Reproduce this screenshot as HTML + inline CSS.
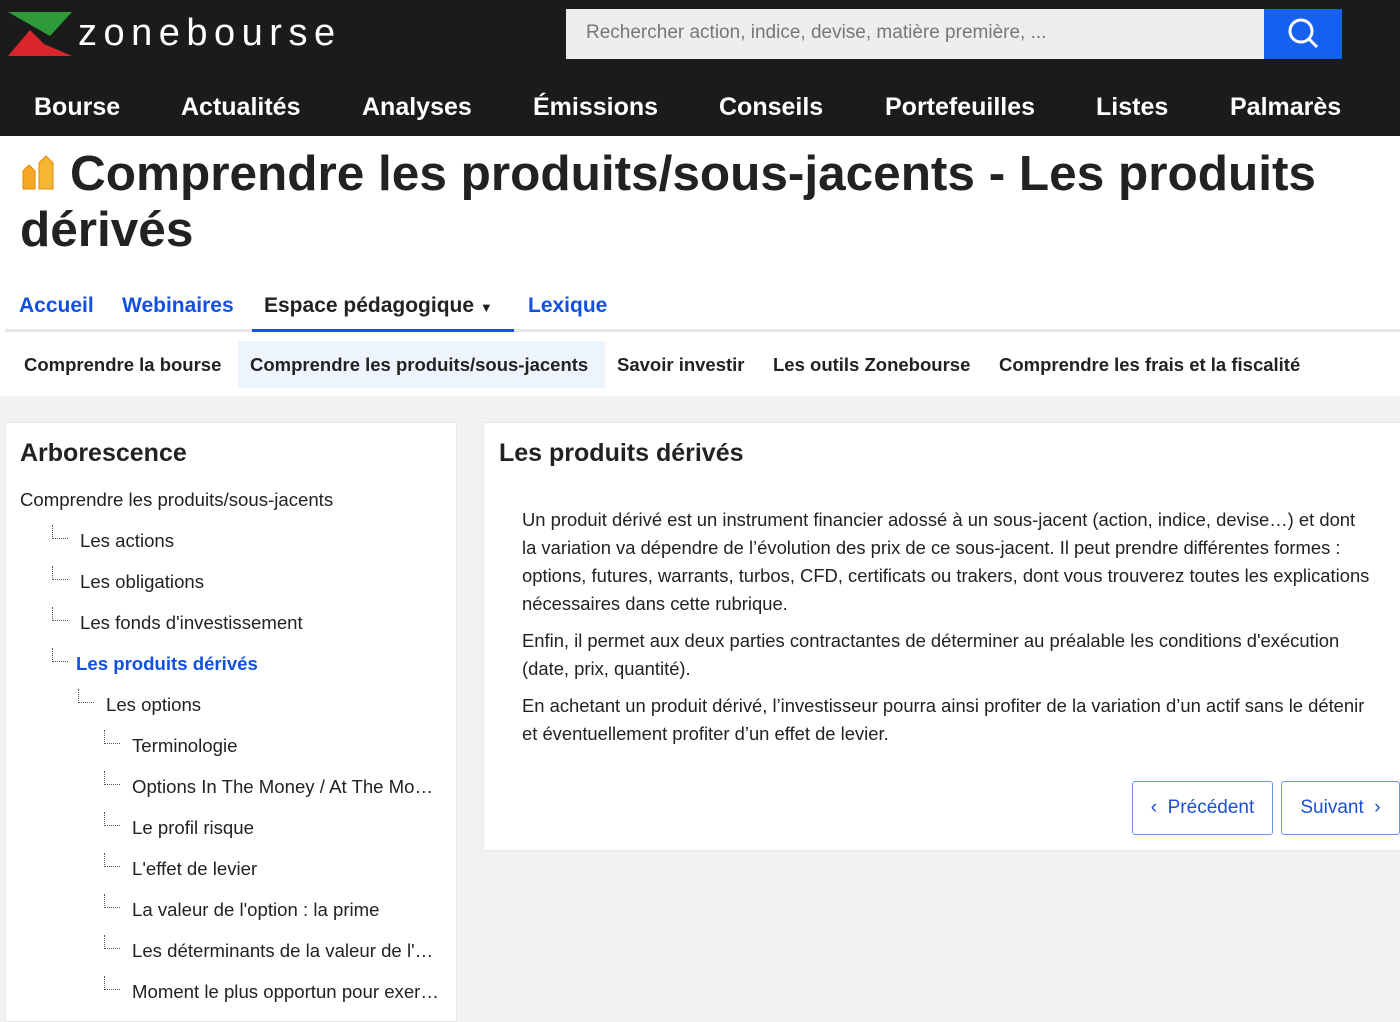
<!DOCTYPE html>
<html><head><meta charset="utf-8"><style>
*{margin:0;padding:0;box-sizing:border-box}
body{width:1400px;height:1000px;overflow:hidden;background:#f2f2f2;font-family:"Liberation Sans",sans-serif;color:#222;position:relative}
.hdr{position:absolute;left:0;top:0;width:1400px;height:136px;background:#1b1b1b}
.logo{position:absolute;left:8px;top:10px}
.logotxt{position:absolute;left:78px;top:12px;color:#fff;font-size:38px;letter-spacing:6.5px}
.search{position:absolute;left:566px;top:9px;width:698px;height:50px;background:#eee;color:#777;font-size:19px;padding:13px 20px}
.sbtn{position:absolute;left:1264px;top:9px;width:78px;height:50px;background:#1660f0}
.nav{position:absolute;top:93px;color:#fff;font-weight:bold;font-size:25px}
.top{position:absolute;left:0;top:136px;width:1400px;height:260px;background:#fff}
h1{position:absolute;left:20px;top:146px;font-size:49.5px;line-height:56px;color:#222;width:1380px;text-indent:50px}
.tab{position:absolute;top:294px;font-size:21px;font-weight:bold;color:#1251e0}
.tabline{position:absolute;left:5px;top:329px;width:1395px;height:3px;background:#e6e6e6}
.tabact{position:absolute;left:252px;top:329px;width:262px;height:3px;background:#1651e6}
.sub{position:absolute;top:354px;font-size:18.5px;font-weight:bold;color:#222}
.subact{position:absolute;left:238px;top:341px;width:367px;height:47px;background:#eef4fb}
.panel{position:absolute;background:#fff;border:1px solid #e8e8e8}
.ph{position:absolute;font-size:25px;font-weight:bold;color:#222}
.ti{position:absolute;font-size:18.6px;color:#222;white-space:nowrap}
.cn{position:absolute;width:16px;height:14px;border-left:1px dotted #555;border-bottom:1px dotted #555}
p{position:absolute;left:522px;width:850px;font-size:18.4px;line-height:28px;color:#222}
.btn{position:absolute;top:781px;height:54px;border:1px solid #6d93e8;border-radius:3px;color:#1a4fd6;font-size:19px;display:flex;align-items:center;justify-content:center;background:#fff}
</style></head><body>
<div class="hdr"></div>
<svg class="logo" width="66" height="48" viewBox="0 0 66 48"><polygon points="0,2 64,2 42,26" fill="#2f9a3a"/><polygon points="22,20 0,46 64,46 36,34" fill="#d8262b"/></svg>
<div class="logotxt">zonebourse</div>
<div class="search">Rechercher action, indice, devise, matière première, ...</div>
<div class="sbtn"><svg width="78" height="50"><circle cx="37" cy="22" r="11" fill="none" stroke="#fff" stroke-width="3"/><line x1="45" y1="30" x2="53" y2="38" stroke="#fff" stroke-width="3"/></svg></div>
<div class="nav" style="left:34px">Bourse</div>
<div class="nav" style="left:181px">Actualités</div>
<div class="nav" style="left:362px">Analyses</div>
<div class="nav" style="left:533px">Émissions</div>
<div class="nav" style="left:719px">Conseils</div>
<div class="nav" style="left:885px">Portefeuilles</div>
<div class="nav" style="left:1096px">Listes</div>
<div class="nav" style="left:1230px">Palmarès</div>
<div class="top"></div>
<svg style="position:absolute;left:21px;top:155px" width="34" height="36" viewBox="0 0 34 36"><path d="M2 16 L8 10 L14 16 V34 H2Z" fill="#f5a623" stroke="#e08a00"/><path d="M18 8 L25 1 L32 8 V34 H18Z" fill="#f7b733" stroke="#e08a00"/></svg>
<h1>Comprendre les produits/sous-jacents - Les produits dérivés</h1>
<div class="tabline"></div><div class="tabact"></div>
<div class="tab" style="left:19px">Accueil</div>
<div class="tab" style="left:122px">Webinaires</div>
<div class="tab" style="left:264px;color:#222">Espace pédagogique <span style="font-size:13px">▼</span></div>
<div class="tab" style="left:528px">Lexique</div>
<div class="subact"></div>
<div class="sub" style="left:24px">Comprendre la bourse</div>
<div class="sub" style="left:250px">Comprendre les produits/sous-jacents</div>
<div class="sub" style="left:617px">Savoir investir</div>
<div class="sub" style="left:773px">Les outils Zonebourse</div>
<div class="sub" style="left:999px">Comprendre les frais et la fiscalité</div>

<div class="panel" style="left:5px;top:422px;width:452px;height:600px"></div>
<div class="ph" style="left:20px;top:439px">Arborescence</div>
<div class="ti" style="left:20px;top:489px">Comprendre les produits/sous-jacents</div>
<div class="cn" style="left:52px;top:525px"></div><div class="ti" style="left:80px;top:530px">Les actions</div>
<div class="cn" style="left:52px;top:566px"></div><div class="ti" style="left:80px;top:571px">Les obligations</div>
<div class="cn" style="left:52px;top:607px"></div><div class="ti" style="left:80px;top:612px">Les fonds d'investissement</div>
<div class="cn" style="left:52px;top:648px"></div><div class="ti" style="left:76px;top:653px;color:#1251e0;font-weight:bold">Les produits dérivés</div>
<div class="cn" style="left:78px;top:689px"></div><div class="ti" style="left:106px;top:694px">Les options</div>
<div class="cn" style="left:104px;top:730px"></div><div class="ti" style="left:132px;top:735px">Terminologie</div>
<div class="cn" style="left:104px;top:771px"></div><div class="ti" style="left:132px;top:776px">Options In The Money / At The Mo…</div>
<div class="cn" style="left:104px;top:812px"></div><div class="ti" style="left:132px;top:817px">Le profil risque</div>
<div class="cn" style="left:104px;top:853px"></div><div class="ti" style="left:132px;top:858px">L'effet de levier</div>
<div class="cn" style="left:104px;top:894px"></div><div class="ti" style="left:132px;top:899px">La valeur de l'option : la prime</div>
<div class="cn" style="left:104px;top:935px"></div><div class="ti" style="left:132px;top:940px">Les déterminants de la valeur de l'…</div>
<div class="cn" style="left:104px;top:976px"></div><div class="ti" style="left:132px;top:981px">Moment le plus opportun pour exer…</div>

<div class="panel" style="left:483px;top:422px;width:930px;height:429px"></div>
<div class="ph" style="left:499px;top:439px">Les produits dérivés</div>
<p style="top:506px">Un produit dérivé est un instrument financier adossé à un sous-jacent (action, indice, devise…) et dont la variation va dépendre de l’évolution des prix de ce sous-jacent. Il peut prendre différentes formes : options, futures, warrants, turbos, CFD, certificats ou trakers, dont vous trouverez toutes les explications nécessaires dans cette rubrique.</p>
<p style="top:627px">Enfin, il permet aux deux parties contractantes de déterminer au préalable les conditions d'exécution (date, prix, quantité).</p>
<p style="top:692px">En achetant un produit dérivé, l’investisseur pourra ainsi profiter de la variation d’un actif sans le détenir et éventuellement profiter d’un effet de levier.</p>
<div class="btn" style="left:1132px;width:141px">‹&nbsp; Précédent</div>
<div class="btn" style="left:1281px;width:119px">Suivant &nbsp;›</div>
</body></html>
